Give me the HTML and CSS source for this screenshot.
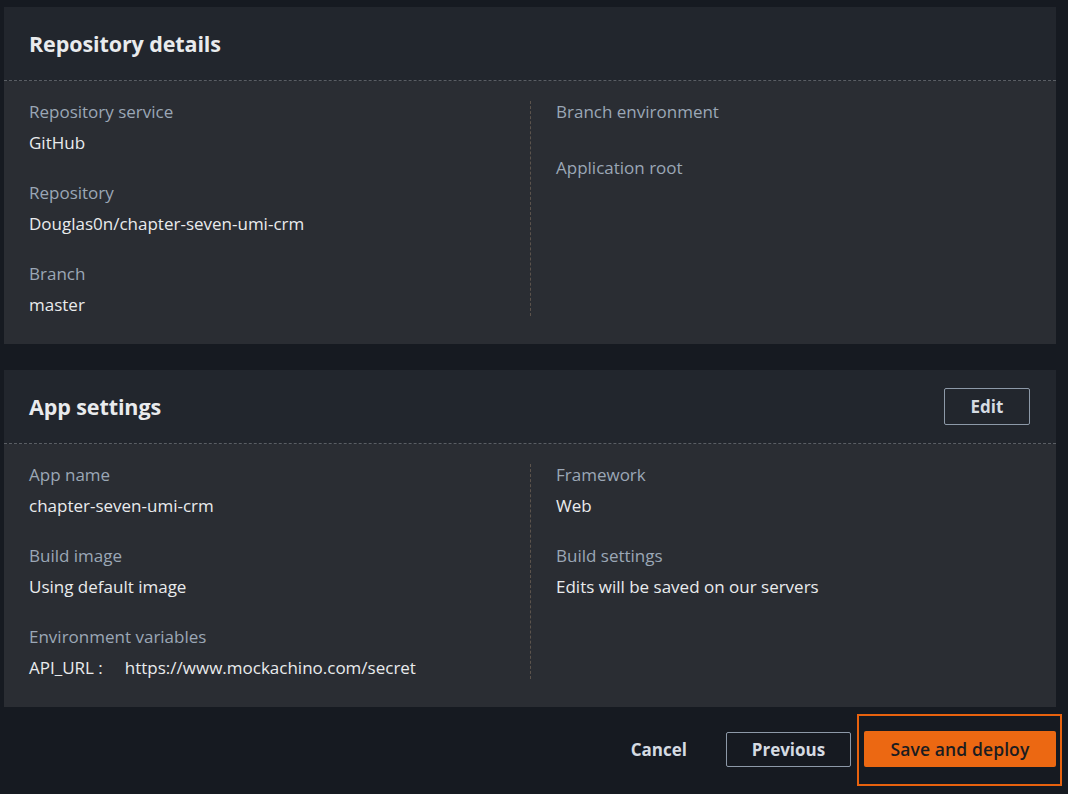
FILE: index.html
```html
<!DOCTYPE html>
<html>
<head>
<meta charset="utf-8">
<link rel="stylesheet" href="styles.css">
</head>
<body>
<div class="page">
  <section class="card">
    <div class="card-header">
      <h2 class="title">Repository details</h2>
    </div>
    <div class="card-body">
      <div class="col">
        <div class="field"><div class="label">Repository service</div><div class="value">GitHub</div></div>
        <div class="field"><div class="label">Repository</div><div class="value">Douglas0n/chapter-seven-umi-crm</div></div>
        <div class="field"><div class="label">Branch</div><div class="value">master</div></div>
      </div>
      <div class="col col-right">
        <div class="field"><div class="label">Branch environment</div><div class="value"></div></div>
        <div class="field"><div class="label">Application root</div><div class="value"></div></div>
      </div>
    </div>
  </section>

  <section class="card">
    <div class="card-header">
      <h2 class="title">App settings</h2>
      <button class="btn btn-normal">Edit</button>
    </div>
    <div class="card-body">
      <div class="col">
        <div class="field"><div class="label">App name</div><div class="value">chapter-seven-umi-crm</div></div>
        <div class="field"><div class="label">Build image</div><div class="value">Using default image</div></div>
        <div class="field"><div class="label">Environment variables</div><div class="value"><span class="env-key">API_URL :</span>https://www.mockachino.com/secret</div></div>
      </div>
      <div class="col col-right">
        <div class="field"><div class="label">Framework</div><div class="value">Web</div></div>
        <div class="field"><div class="label">Build settings</div><div class="value">Edits will be saved on our servers</div></div>
      </div>
    </div>
  </section>

  <div class="actions">
    <button class="btn btn-link">Cancel</button>
    <button class="btn btn-normal btn-prev">Previous</button>
    <div class="primary-wrap">
      <button class="btn btn-primary">Save and deploy</button>
      <span class="highlight"></span>
    </div>
  </div>
</div>
</body>
</html>
```

FILE: styles.css
```css
* { box-sizing: border-box; }
html, body {
  margin: 0;
  padding: 0;
  background: #161a21;
}
body {
  font-family: "Open Sans", "Noto Sans", sans-serif;
  color: #e9ebed;
  width: 1068px;
  height: 794px;
  overflow: hidden;
}
.page {
  padding: 7px 12px 0 4px;
  display: flex;
  flex-direction: column;
  gap: 26px;
}
.card {
  background: #2a2d33;
}
.card-header {
  background: #22262d;
  height: 74px;
  border-bottom: 1px dashed #5a5e64;
  display: flex;
  align-items: center;
  justify-content: space-between;
  padding: 0 26px 0 25px;
}
.title {
  margin: 0;
  font-size: 21.5px;
  font-weight: 700;
  color: #e9ebed;
  letter-spacing: -0.1px;
}
.card-body {
  display: grid;
  grid-template-columns: 501px 1fr;
  padding: 20px 25px 28px 25px;
}
.col {
  display: flex;
  flex-direction: column;
  gap: 28px;
}
.col-right {
  border-left: 1px dashed #5c534c;
  padding-left: 25px;
}
.label {
  font-size: 17px;
  line-height: 22px;
  color: #9ba7b6;
}
.value {
  font-size: 17px;
  line-height: 22px;
  color: #e9ebed;
  margin-top: 9px;
}
.value:empty { margin-top: 6px; }
.env-key {
  display: inline-block;
  margin-right: 22px;
}
.btn {
  font-family: inherit;
  font-size: 17px;
  font-weight: 700;
  cursor: pointer;
}
.btn-normal {
  background: transparent;
  color: #d5dbe2;
  border: 1px solid #8d99a8;
  border-radius: 2px;
  height: 37px;
  padding: 0 26px;
}
.card-header .btn-normal { width: 86px; padding: 0; }
.actions {
  display: flex;
  justify-content: flex-end;
  align-items: center;
  gap: 13px;
  margin-top: -2px;
}
.btn-link {
  background: transparent;
  border: none;
  color: #d5dbe2;
  padding: 0 26px 0 20px;
}
.btn-prev {
  width: 125px;
  height: 35px;
  padding: 0;
}
.primary-wrap {
  position: relative;
}
.btn-primary {
  background: #ec6812;
  border: none;
  color: #1a1c20;
  font-weight: 600;
  font-size: 17.5px;
  border-radius: 2px;
  width: 192px;
  height: 36px;
  letter-spacing: 0.1px;
}
.highlight {
  position: absolute;
  left: -7px;
  top: -17px;
  width: 205px;
  height: 72px;
  border: 2px solid #e8620e;
  pointer-events: none;
}
```
